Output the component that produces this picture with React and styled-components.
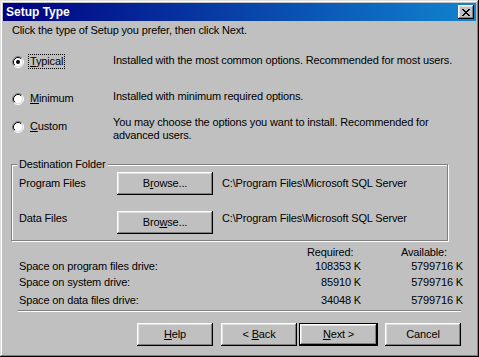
import styled, { createGlobalStyle } from "styled-components";

const GlobalStyle = createGlobalStyle`
  html, body {
    margin: 0;
    padding: 0;
    background: #c0c0c0;
  }
  body {
    font-family: "Liberation Sans", Arial, sans-serif;
    font-size: 11px;
    line-height: 13px;
    letter-spacing: -0.15px;
    color: #000;
  }
`;

const Window = styled.div`
  width: 479px;
  height: 357px;
  box-sizing: border-box;
  padding: 3px;
  background: #c0c0c0;
  box-shadow: inset -1px -1px #000, inset 1px 1px #dfdfdf,
    inset -2px -2px #808080, inset 2px 2px #fff;
  display: flex;
  flex-direction: column;
`;

const TitleBar = styled.div`
  height: 18px;
  display: flex;
  align-items: center;
  padding: 0 2px 0 3px;
  background: linear-gradient(to right, #000080, #1084d0);
  color: #fff;
  font-weight: bold;
  font-size: 12px;
  letter-spacing: 0;
`;

const CloseButton = styled.div`
  margin-left: auto;
  width: 16px;
  height: 14px;
  background: #c0c0c0;
  box-shadow: inset -1px -1px #000, inset 1px 1px #fff,
    inset -2px -2px #808080, inset 2px 2px #dfdfdf;
  display: flex;
  align-items: center;
  justify-content: center;
`;

const Body = styled.div`
  display: flex;
  flex-direction: column;
  padding-left: 8px;
`;

const Intro = styled.div`
  margin: 3px 0 0 1px;
`;

const Options = styled.div`
  display: grid;
  grid-template-columns: 101px 1fr;
  grid-template-rows: 36px 26px 26px;
  margin: 17px 0 0 1px;
`;

const Choice = styled.div`
  display: flex;
  align-items: center;
  align-self: start;
  margin-top: ${(p) => p.$offset || 0}px;
`;

const ChoiceLabel = styled.span`
  margin-left: 4px;
  padding: 0 1px;
  border: 1px dotted ${(p) => (p.$focused ? "#000" : "transparent")};
`;

const Desc = styled.div`
  width: 350px;
`;

const GroupBox = styled.div`
  margin-top: 22px;
  width: 437px;
  box-sizing: border-box;
  border: 1px solid #808080;
  box-shadow: inset 1px 1px #fff, 1px 1px #fff;
  padding: 0 0 6px 7px;
`;

const GroupLabel = styled.div`
  display: table;
  margin: -7px 0 0 -2px;
  padding: 0 2px;
  background: #c0c0c0;
`;

const FolderRow = styled.div`
  display: flex;
  align-items: flex-start;
  margin-top: ${(p) => p.$gap}px;
`;

const FolderName = styled.div`
  width: 98px;
  margin-top: ${(p) => p.$offset}px;
`;

const FolderPath = styled.div`
  margin: ${(p) => p.$offset}px 0 0 9px;
`;

const Button = styled.div`
  width: ${(p) => p.$width || 75}px;
  height: 23px;
  box-sizing: border-box;
  display: flex;
  align-items: center;
  justify-content: center;
  margin-left: ${(p) => p.$left || 0}px;
  background: #c0c0c0;
  border: ${(p) => (p.$default ? "1px solid #000" : "none")};
  box-shadow: inset -1px -1px #000, inset 1px 1px #fff,
    inset -2px -2px #808080, inset 2px 2px #dfdfdf;
`;

const SpaceTable = styled.div`
  display: grid;
  grid-template-columns: 288px 54px 102px;
  grid-template-rows: 14px 16px 18px 13px;
  margin: 5px 0 0 8px;
`;

const Cell = styled.div`
  text-align: ${(p) => p.$align || "left"};
  padding-left: ${(p) => p.$indent || 0}px;
`;

const Separator = styled.div`
  width: 443px;
  margin: 3px 0 0 7px;
  border-top: 1px solid #808080;
  border-bottom: 1px solid #fff;
`;

const ButtonRow = styled.div`
  display: flex;
  margin: 11px 0 0 126px;
`;

const Radio = ({ checked }) => (
  <svg width="12" height="12" viewBox="0 0 12 12">
    <circle cx="6" cy="6" r="4.5" fill="#fff" />
    <path d="M2.11 9.89 A5.5 5.5 0 0 1 9.89 2.11" fill="none" stroke="#808080" />
    <path d="M9.89 2.11 A5.5 5.5 0 0 1 2.11 9.89" fill="none" stroke="#fff" />
    <path d="M2.82 9.18 A4.5 4.5 0 0 1 9.18 2.82" fill="none" stroke="#000" />
    <path d="M9.18 2.82 A4.5 4.5 0 0 1 2.82 9.18" fill="none" stroke="#dfdfdf" />
    {checked && <circle cx="6" cy="6" r="2" fill="#000" />}
  </svg>
);

const CloseGlyph = () => (
  <svg width="8" height="7" viewBox="0 0 8 7" shapeRendering="crispEdges">
    <path
      d="M0 0h2v1h-2zM6 0h2v1h-2zM1 1h2v1h-2zM5 1h2v1h-2zM2 2h4v1h-4zM3 3h2v1h-2zM2 4h4v1h-4zM1 5h2v1h-2zM5 5h2v1h-2zM0 6h2v1h-2zM6 6h2v1h-2z"
      fill="#000"
    />
  </svg>
);

const spaceRows = [
  ["Space on program files drive:", "108353 K", "5799716 K"],
  ["Space on system drive:", "85910 K", "5799716 K"],
  ["Space on data files drive:", "34048 K", "5799716 K"],
];

export default function App() {
  return (
    <>
      <GlobalStyle />
      <Window>
        <TitleBar>
          Setup Type
          <CloseButton>
            <CloseGlyph />
          </CloseButton>
        </TitleBar>
        <Body>
          <Intro>Click the type of Setup you prefer, then click Next.</Intro>
          <Options>
            <Choice>
              <Radio checked />
              <ChoiceLabel $focused>
                <u>T</u>ypical
              </ChoiceLabel>
            </Choice>
            <Desc>Installed with the most common options. Recommended for most users.</Desc>
            <Choice $offset={1}>
              <Radio />
              <ChoiceLabel>
                <u>M</u>inimum
              </ChoiceLabel>
            </Choice>
            <Desc>Installed with minimum required options.</Desc>
            <Choice $offset={3}>
              <Radio />
              <ChoiceLabel>
                <u>C</u>ustom
              </ChoiceLabel>
            </Choice>
            <Desc>You may choose the options you want to install. Recommended for advanced users.</Desc>
          </Options>

          <GroupBox>
            <GroupLabel>Destination Folder</GroupLabel>
            <FolderRow $gap={1}>
              <FolderName $offset={5}>Program Files</FolderName>
              <Button $width={96}>
                <span>
                  B<u>r</u>owse...
                </span>
              </Button>
              <FolderPath $offset={5}>C:\Program Files\Microsoft SQL Server</FolderPath>
            </FolderRow>
            <FolderRow $gap={16}>
              <FolderName $offset={1}>Data Files</FolderName>
              <Button $width={96}>
                <span>
                  Bro<u>w</u>se...
                </span>
              </Button>
              <FolderPath $offset={1}>C:\Program Files\Microsoft SQL Server</FolderPath>
            </FolderRow>
          </GroupBox>

          <SpaceTable>
            <Cell />
            <Cell>Required:</Cell>
            <Cell $indent={40}>Available:</Cell>
            {spaceRows.map(([label, req, avail]) => [
              <Cell key={label}>{label}</Cell>,
              <Cell key={label + "r"} $align="right">{req}</Cell>,
              <Cell key={label + "a"} $align="right">{avail}</Cell>,
            ])}
          </SpaceTable>

          <Separator />

          <ButtonRow>
            <Button $width={76}>
              <span>
                <u>H</u>elp
              </span>
            </Button>
            <Button $left={8} $width={76}>
              <span>
                &lt; <u>B</u>ack
              </span>
            </Button>
            <Button $left={2} $width={79} $default>
              <span>
                <u>N</u>ext &gt;
              </span>
            </Button>
            <Button $left={7} $width={76}>Cancel</Button>
          </ButtonRow>
        </Body>
      </Window>
    </>
  );
}
